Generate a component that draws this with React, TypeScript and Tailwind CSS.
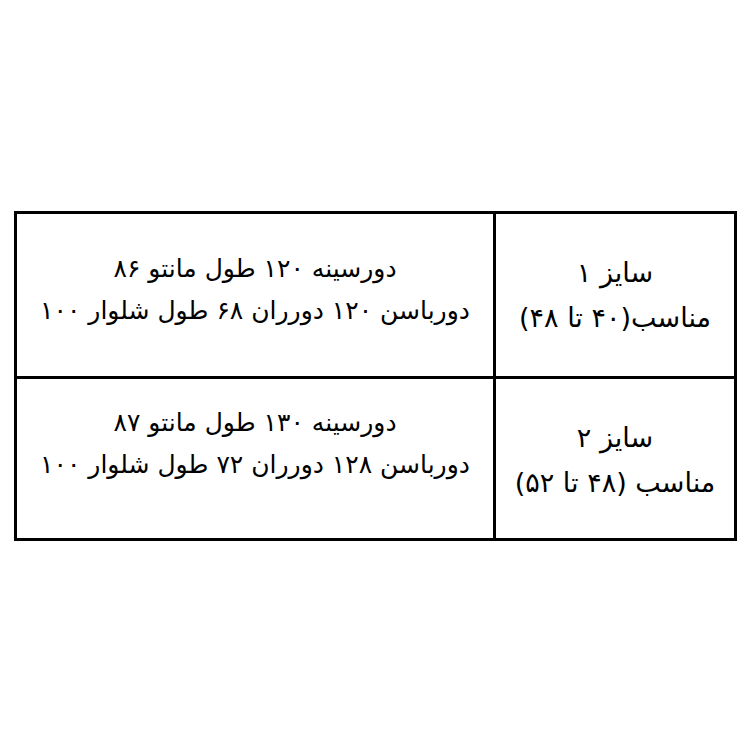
const rows = [
    {
        size: "سایز ۱",
        fit: "مناسب(۴۰ تا ۴۸)",
        line1: "دورسینه ۱۲۰ طول مانتو ۸۶",
        line2: "دورباسن ۱۲۰ دورران ۶۸ طول شلوار ۱۰۰",
        pad: "pt-[34px]",
    },
    {
        size: "سایز ۲",
        fit: "مناسب (۴۸ تا ۵۲)",
        line1: "دورسینه ۱۳۰ طول مانتو ۸۷",
        line2: "دورباسن ۱۲۸ دورران ۷۲ طول شلوار ۱۰۰",
        pad: "pt-[23px]",
    },
];

export default function App() {
    return (
        <div className="w-[750px] h-[750px] bg-white pt-[211px] pl-[14px]">
            <div
                dir="rtl"
                className="w-[723px] border-[3px] border-black grid grid-cols-[238px_1fr] text-black font-['DejaVu_Sans',sans-serif]"
            >
                {rows.map((row, i) => (
                    <div key={i} className="contents">
                        <div
                            className={`h-[162px] flex flex-col items-center pt-[36px] text-[27px] leading-[45px] ${i > 0 ? "border-t-[3px] border-black" : ""}`}
                        >
                            <p>{row.size}</p>
                            <p>{row.fit}</p>
                        </div>
                        <div
                            className={`h-[162px] flex flex-col items-center ${row.pad} text-[25px] leading-[42px] border-r-[3px] border-black ${i > 0 ? "border-t-[3px]" : ""}`}
                        >
                            <p>{row.line1}</p>
                            <p>{row.line2}</p>
                        </div>
                    </div>
                ))}
            </div>
        </div>
    );
}
